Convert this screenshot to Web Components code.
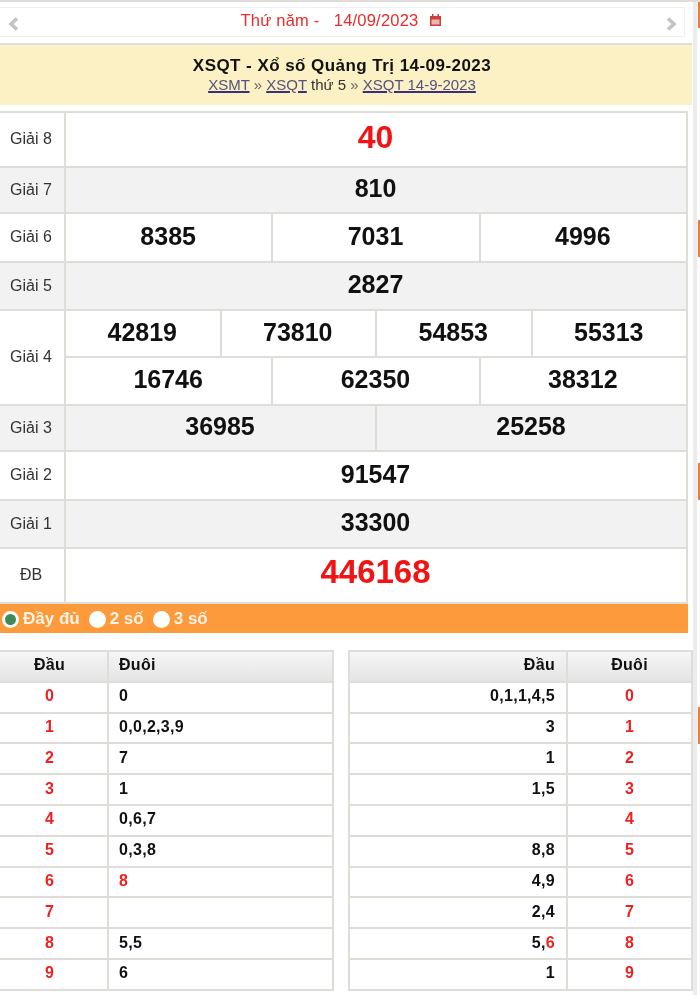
<!DOCTYPE html>
<html lang="vi">
<head>
<meta charset="utf-8">
<title>XSQT 14-09-2023</title>
<style>
html, body
{
    margin: 0;
    padding: 0;
    height: 995px;
    overflow: hidden;
    background-color: #fff;
    font-family: "Liberation Sans", Arial, sans-serif;
}
</style>
</head>
<body>

<xs-page>
    <xs-datebar>Thứ năm -&nbsp;&nbsp; 14/09/2023</xs-datebar>

    <xs-title>
        <span slot="title">XSQT - Xổ số Quảng Trị 14-09-2023</span>
        <a href="#">XSMT</a> <i>»</i> <a href="#">XSQT</a> thứ 5 <i>»</i> <a href="#">XSQT 14-9-2023</a>
    </xs-title>

    <xs-results>
        <xs-prize label="Giải 8" height="55"><xs-line nums="40" kind="g8" height="55"></xs-line></xs-prize>
        <xs-prize label="Giải 7" height="46" alt><xs-line nums="810" height="46"></xs-line></xs-prize>
        <xs-prize label="Giải 6" height="49"><xs-line nums="8385 7031 4996" height="49"></xs-line></xs-prize>
        <xs-prize label="Giải 5" height="48" alt><xs-line nums="2827" height="48"></xs-line></xs-prize>
        <xs-prize label="Giải 4" height="95">
            <xs-line nums="42819 73810 54853 55313" height="47"></xs-line>
            <xs-line nums="16746 62350 38312" height="48"></xs-line>
        </xs-prize>
        <xs-prize label="Giải 3" height="46" alt><xs-line nums="36985 25258" height="46"></xs-line></xs-prize>
        <xs-prize label="Giải 2" height="49"><xs-line nums="91547" height="49"></xs-line></xs-prize>
        <xs-prize label="Giải 1" height="48" alt><xs-line nums="33300" height="48"></xs-line></xs-prize>
        <xs-prize label="ĐB" height="55"><xs-line nums="446168" kind="db" height="55"></xs-line></xs-prize>
    </xs-results>

    <xs-filter></xs-filter>

    <xs-loto-pair>
        <xs-loto side="left" head="Đầu,Đuôi" rows="0|0;1|0,0,2,3,9;2|7;3|1;4|0,6,7;5|0,3,8;6|*8;7|;8|5,5;9|6"></xs-loto>
        <xs-loto side="right" head="Đầu,Đuôi" rows="0|0,1,1,4,5;1|3;2|1;3|1,5;4|;5|8,8;6|4,9;7|2,4;8|5,*6;9|1"></xs-loto>
    </xs-loto-pair>

    <xs-rail></xs-rail>
</xs-page>

<script>
const LINE = '#e0ddd9'

/* PAGE */

class XSPage extends HTMLElement
{
    constructor()
    {
        super()

        this.attachShadow({mode: "open"})

        this.shadowRoot.innerHTML =
        `
        <style>
        :host
        {
            display: block;
            position: relative;
            width: 700px;
            height: 995px;
            overflow: hidden;
            color: #000;
            border-top: 2px solid ${LINE};
            box-sizing: border-box;
            filter: blur(0.4px);
        }
        </style>
        <slot></slot>
        `
    }
}

/* DATE BAR */

class XSDatebar extends HTMLElement
{
    constructor()
    {
        super()

        this.attachShadow({mode: "open"})

        this.shadowRoot.innerHTML =
        `
        <style>
        :host
        {
            display: block;
            width: 692px;
            height: 43px;
            box-sizing: border-box;
            padding: 5px 7px 0 0;
            border-bottom: 2px solid ${LINE};
        }
        #bar
        {
            display: flex;
            align-items: center;
            justify-content: space-between;
            height: 30px;
            box-sizing: border-box;
            border: 1px solid #f0f0f4;
            border-left: 0;
            padding: 0 6px 0 7px;
        }
        #date
        {
            display: flex;
            align-items: center;
            gap: 12px;
            color: #ea2b2b;
            font-size: 16.5px;
            letter-spacing: 0.2px;
            margin-left: -3px;
            position: relative;
            top: -2px;
        }
        svg
        {
            display: block;
        }
        .arrow
        {
            margin-top: 4px;
        }
        </style>
        <div id="bar">
            <svg class="arrow" width="12" height="14" viewBox="0 0 12 14"><path d="M10 1.5 L4 7 L10 12.5" fill="none" stroke="#c4c4c4" stroke-width="3.6"/></svg>
            <div id="date">
                <slot></slot>
                <svg width="11" height="12" viewBox="0 0 11 12"><path d="M0 2 H2 V0 H3.5 V2 H7.5 V0 H9 V2 H11 V12 H0 Z" fill="#c8403f"/><rect x="1.5" y="5.5" width="8" height="5" fill="#efb4b0"/></svg>
            </div>
            <svg class="arrow" width="12" height="14" viewBox="0 0 12 14"><path d="M2 1.5 L8 7 L2 12.5" fill="none" stroke="#c4c4c4" stroke-width="3.6"/></svg>
        </div>
        `
    }
}

/* TITLE */

class XSTitle extends HTMLElement
{
    constructor()
    {
        super()

        this.attachShadow({mode: "open"})

        this.shadowRoot.innerHTML =
        `
        <style>
        :host
        {
            display: block;
            height: 60px;
            width: 692px;
            box-sizing: border-box;
            padding: 10px 8px 0 0;
            background-color: #fcf1c4;
            text-align: center;
            font-size: 15px;
            line-height: 17px;
            color: #333;
        }
        #title
        {
            font-size: 17px;
            letter-spacing: 0.45px;
            line-height: 21px;
            font-weight: bold;
            color: #111;
        }
        ::slotted(a)
        {
            color: #55527f;
            text-decoration-color: #3b3078;
            text-decoration-thickness: 2px;
        }
        ::slotted(i)
        {
            font-style: normal;
            color: #666;
        }
        </style>
        <div id="title"><slot name="title"></slot></div>
        <div><slot></slot></div>
        `
    }
}

/* RESULT TABLE */

class XSResults extends HTMLElement
{
    constructor()
    {
        super()

        this.attachShadow({mode: "open"})

        this.shadowRoot.innerHTML =
        `
        <style>
        :host
        {
            display: block;
            width: 690px;
            margin: 6px 0 0 -2px;
            box-sizing: border-box;
            border: 2px solid ${LINE};
            border-bottom: 0;
        }
        </style>
        <slot></slot>
        `
    }
}

class XSPrize extends HTMLElement
{
    constructor()
    {
        super()

        this.attachShadow({mode: "open"})

        this.shadowRoot.innerHTML =
        `
        <style>
        :host
        {
            display: flex;
            box-sizing: border-box;
            border-bottom: 2px solid ${LINE};
        }
        :host([alt])
        {
            background-color: #f2f2f2;
        }
        #label
        {
            flex: 0 0 66px;
            display: flex;
            align-items: center;
            justify-content: center;
            box-sizing: border-box;
            padding: 0 2px 1px 0;
            border-right: 2px solid ${LINE};
            background-color: #fff;
            font-size: 16px;
            color: #333;
        }
        :host([alt]) #label
        {
            background-color: #f2f2f2;
        }
        #lines
        {
            flex: 1;
            min-width: 0;
        }
        </style>
        <div id="label"></div>
        <div id="lines"><slot></slot></div>
        `
    }

    connectedCallback()
    {
        this.shadowRoot.querySelector('#label').textContent = this.getAttribute('label')
        this.style.height = this.getAttribute('height') + 'px'
    }
}

class XSLine extends HTMLElement
{
    constructor()
    {
        super()

        this.attachShadow({mode: "open"})

        this.shadowRoot.innerHTML =
        `
        <style>
        :host
        {
            display: flex;
            box-sizing: border-box;
        }
        :host(:not(:last-child))
        {
            border-bottom: 2px solid ${LINE};
        }
        span
        {
            flex: 1 1 0;
            display: flex;
            align-items: center;
            justify-content: center;
            padding: 0 1px 3px 0;
            font-size: 25px;
            font-weight: bold;
            color: #111;
        }
        span + span
        {
            border-left: 2px solid ${LINE};
        }
        :host([kind=g8]) span
        {
            padding-bottom: 5px;
            font-size: 32px;
            color: #f01414;
        }
        :host([kind=db]) span
        {
            padding-bottom: 8px;
            font-size: 33px;
            color: #f01414;
        }
        </style>
        `
    }

    connectedCallback()
    {
        const height = Number(this.getAttribute('height'))

        // rows include the bottom border of the prize, so take it off the line
        this.style.height = (height - 2 + (this.nextElementSibling ? 2 : 0)) + 'px'

        this.getAttribute('nums').split(' ').forEach(num =>
        {
            const cell = document.createElement('span')

            cell.textContent = num

            this.shadowRoot.appendChild(cell)
        })
    }
}

/* FILTER BAR */

class XSFilter extends HTMLElement
{
    constructor()
    {
        super()

        this.attachShadow({mode: "open"})

        this.shadowRoot.innerHTML =
        `
        <style>
        :host
        {
            display: flex;
            align-items: center;
            gap: 9px;
            width: 688px;
            height: 29px;
            box-sizing: border-box;
            padding: 1px 0 0 2px;
            background-color: #fd9a3c;
            color: #fdf3e6;
            font-size: 17px;
            font-weight: bold;
        }
        label
        {
            display: flex;
            align-items: center;
            gap: 4px;
        }
        b
        {
            display: block;
            width: 17px;
            height: 17px;
            border-radius: 50%;
            background-color: #fff;
            box-sizing: border-box;
        }
        .on
        {
            border: 3px solid #fff;
            background-color: #3f8a57;
        }
        </style>
        <label><b class="on"></b>Đầy đủ</label>
        <label><b></b>2 số</label>
        <label><b></b>3 số</label>
        `
    }
}

/* LOTO TABLES */

class XSLotoPair extends HTMLElement
{
    constructor()
    {
        super()

        this.attachShadow({mode: "open"})

        this.shadowRoot.innerHTML =
        `
        <style>
        :host
        {
            display: flex;
            gap: 14px;
            margin: 17px 0 0 -2px;
        }
        </style>
        <slot></slot>
        `
    }
}

class XSLoto extends HTMLElement
{
    constructor()
    {
        super()

        this.attachShadow({mode: "open"})

        this.shadowRoot.innerHTML =
        `
        <style>
        :host
        {
            display: block;
            box-sizing: border-box;
            border: 2px solid ${LINE};
            border-bottom: 0;
            font-size: 16px;
            letter-spacing: 0.3px;
            font-weight: bold;
            color: #111;
        }
        :host([side=left])
        {
            width: 336px;
        }
        :host([side=right])
        {
            width: 345px;
        }
        .row
        {
            display: grid;
            height: 30.8px;
            box-sizing: border-box;
            border-bottom: 2px solid ${LINE};
        }
        :host([side=left]) .row
        {
            grid-template-columns: 107px 1fr;
        }
        :host([side=right]) .row
        {
            grid-template-columns: 1fr 125px;
        }
        .row > div
        {
            display: flex;
            align-items: center;
            padding-bottom: 2px;
            box-sizing: border-box;
        }
        .row > div + div
        {
            border-left: 2px solid ${LINE};
        }
        .head
        {
            background: linear-gradient(#f6f6f6, #e4e4e4);
        }
        :host([side=left]) .key,
        :host([side=right]) .val + .key
        {
            justify-content: center;
        }
        :host([side=left]) .key
        {
            padding-right: 8px;
        }
        :host([side=left]) .val
        {
            padding-left: 10px;
        }
        :host([side=right]) .val
        {
            justify-content: flex-end;
            padding-right: 11px;
        }
        .key, em
        {
            color: #ee2020;
            font-style: normal;
        }
        .head .key
        {
            color: #111;
        }
        </style>
        `
    }

    connectedCallback()
    {
        const right = this.getAttribute('side') == 'right'
        const [first, second] = this.getAttribute('head').split(',')

        this._addRow(first, second, true, right)

        this.getAttribute('rows').split(';').forEach(item =>
        {
            const [key, values] = item.split('|')

            this._addRow(key, values, false, right)
        })
    }

    _addRow(key, values, isHead, right)
    {
        const row = document.createElement('div')
        const keyCell = document.createElement('div')
        const valCell = document.createElement('div')

        row.className = isHead ? 'row head' : 'row'
        keyCell.className = 'key'
        valCell.className = 'val'

        if(isHead)
        {
            // right table has the same captions, but the value column comes first
            keyCell.textContent = right ? values : key
            valCell.textContent = right ? key : values
        }
        else
        {
            keyCell.textContent = key

            valCell.innerHTML = `<span>${values.replace(/\*(\d)/g, '<em>$1</em>')}</span>`
        }

        if(right)
        {
            row.append(valCell, keyCell)
        }
        else
        {
            row.append(keyCell, valCell)
        }

        this.shadowRoot.appendChild(row)
    }
}

/* SIDE RAIL */

class XSRail extends HTMLElement
{
    constructor()
    {
        super()

        this.attachShadow({mode: "open"})

        this.shadowRoot.innerHTML =
        `
        <style>
        :host
        {
            position: absolute;
            top: 0;
            right: 3px;
            bottom: 0;
            width: 4px;
            background-color: #ececec;
        }
        i
        {
            position: absolute;
            left: 5px;
            width: 2px;
            height: 37px;
            background-color: #ee7a3c;
        }
        </style>
        <i style="top: -2px; height: 28px"></i>
        <i style="top: 218px"></i>
        <i style="top: 461px"></i>
        <i style="top: 705px"></i>
        `
    }
}

window.customElements.define('xs-page', XSPage)
window.customElements.define('xs-datebar', XSDatebar)
window.customElements.define('xs-title', XSTitle)
window.customElements.define('xs-results', XSResults)
window.customElements.define('xs-prize', XSPrize)
window.customElements.define('xs-line', XSLine)
window.customElements.define('xs-filter', XSFilter)
window.customElements.define('xs-loto-pair', XSLotoPair)
window.customElements.define('xs-loto', XSLoto)
window.customElements.define('xs-rail', XSRail)
</script>
</body>
</html>
